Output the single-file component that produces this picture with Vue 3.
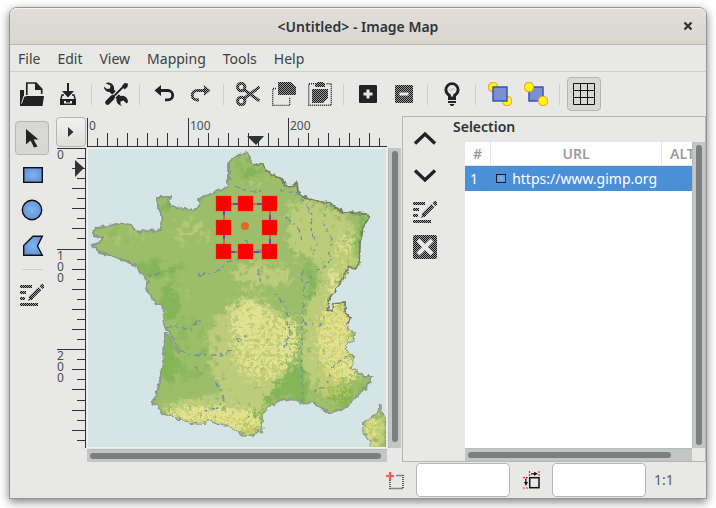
<script setup>
import { ref } from 'vue'

const ink = '#222'
const dither = 'url(#dither)'

const editLines = `<path fill="${dither}" d="M0 3h12v3H0zM0 9h6v3H0zM0 15h5v3H0zM0 21h18v3H0z"/><path d="M10 16.500L20 6.500" fill="none" stroke="${dither}" stroke-width="4"/><path d="M10 14l3 3-5 2z" fill="${dither}"/><path d="M21 5.500L23.500 3" fill="none" stroke="${dither}" stroke-width="4"/>`

const icons = {
  open: `<path fill="${ink}" d="M0 8h4v6l-3 6 3-6h20l-1.500 10H0z"/><path fill="none" stroke="${ink}" stroke-width="1.700" d="M6.800 13V1H16l5.700 6v5"/><path fill="${ink}" d="M15 .5l7.500 7.500H15z"/><path stroke="#e8e8e6" stroke-width="1" fill="none" d="M1.500 21.500L4 14h2"/>`,
  save: `<path fill="${ink}" d="M11 1h2v8h5l-6 6.500L6 9h5zM4 17h16v6H4z"/><path fill="none" stroke="${ink}" stroke-width="1.400" d="M8 13H6l-1.300 5M16 13h2l1.300 5"/><path fill="#e8e8e6" d="M8 19h8v2.500H8z"/><path fill="${ink}" d="M10 19h4v1.500h-4z"/>`,
  tools: `<path fill="${ink}" d="M1.500 1.200L4 .5a6 6 0 0 1 6 7L16.500 14a6 6 0 0 1 7.500 6l-1.500 1.500-3-3-3 1 0 3 2 1.300a6 6 0 0 1-6-7L5.500 10A5.500 5.500 0 0 1 0 4.500l3 2.500 3-.5.5-3z"/><path stroke="#e8e8e6" stroke-width="4.500" d="M6 18L19 5"/><path stroke="${ink}" stroke-width="4.600" stroke-linecap="round" d="M3.500 20.500l5-5"/><path stroke="${ink}" stroke-width="1.800" d="M8 16L20 4"/><path fill="${ink}" d="M18 4l2.500-3 3.500.5-.5 3.500-3 2.500z"/>`,
  undo: `<path fill="${ink}" d="M2.500 8.500L9 3v11z"/><path fill="none" stroke="${ink}" stroke-width="2.800" d="M8 8.500h8a4.700 4.700 0 0 1 0 9.400h-3"/>`,
  redo: `<path fill="${dither}" d="M22.500 8.500L16 3v11z"/><path fill="none" stroke="${dither}" stroke-width="3" d="M17 8.500H9a4.700 4.700 0 0 0 0 9.400h2"/>`,
  cut: `<g fill="none" stroke="${dither}" stroke-width="3"><circle cx="5.200" cy="5" r="3.700"/><circle cx="5.200" cy="19" r="3.700"/><path d="M8 7.500L23.500 19M8 16.500L23.500 5"/></g>`,
  copy: `<path fill="none" stroke="${ink}" stroke-width="1.400" stroke-dasharray="1 1" d="M4 6.500H.7v17h17V15"/><path fill="${dither}" d="M6 0h13l5 5v8H6z"/>`,
  paste: `<path fill="none" stroke="${ink}" stroke-width="1.400" stroke-dasharray="1 1" d="M6 1.700H.7v21.600h22.600V1.700H18"/><path fill="${dither}" d="M9 0h6v1h2v4H7V1h2zM4 7h16v9l-5 5H4z"/>`,
  plus: `<rect x="3" y="3" width="18" height="18" rx="1" fill="${ink}"/><path stroke="#e8e8e6" stroke-width="3" d="M7.500 12h9M12 7.500v9"/>`,
  minus: `<rect x="3" y="3" width="18" height="18" rx="1" fill="${dither}"/><path stroke="#e8e8e6" stroke-width="3" d="M7.500 12h9"/>`,
  bulb: `<path fill="none" stroke="${ink}" stroke-width="2.800" d="M9.500 16v-2.500C7 12 5.900 10 5.900 7.800a6.100 6.100 0 0 1 12.200 0c0 2.200-1.100 4.200-3.600 5.700V16"/><path fill="${ink}" d="M8 14.500h8V18H8zM8 19h8v2H8zM9.500 22h5l-1.500 2h-2z"/><path fill="none" stroke="#aaa" d="M9.500 7.500q1.200 2 2.500 0t2.500 0"/>`,
  front: `<g fill="#ff0" stroke="#ff9d3c" stroke-width="1.200"><circle cx="5" cy="5" r="4.600"/><circle cx="19" cy="19" r="4.600"/></g><rect x="5" y="5" width="14" height="14" fill="#7b8fd0" stroke="#2f4fb0" stroke-width="1.400"/>`,
  back: `<rect x="5" y="5" width="14" height="14" fill="#7b8fd0" stroke="#2f4fb0" stroke-width="1.400"/><g fill="#ff0" stroke="#ff9d3c" stroke-width="1.200"><circle cx="5" cy="5" r="4.600"/><circle cx="19" cy="19" r="4.600"/></g>`,
  grid: `<path fill="none" stroke="#111" stroke-width="1" d="M1.500 1.500h21v21h-21zM8.500 1v22M15.500 1v22M1 8.500h22M1 15.500h22"/>`,
  pointer: `<path fill="${ink}" d="M6 3l12.500 10.500h-5l4 7-3.500 1-3.500-7-4.500 4z"/>`,
  rect: `<rect x="3.700" y="5.700" width="18.600" height="14.600" fill="url(#shapeFill)" stroke="#111" stroke-width="1.400"/>`,
  circle: `<circle cx="12" cy="12" r="9.700" fill="url(#shapeFill)" stroke="#111" stroke-width="1.400"/>`,
  polygon: `<path d="M3.700 21.300V11.500l9.300-9.300h9.300L17.500 12l4.800 9.300z" fill="url(#shapeFill)" stroke="#111" stroke-width="1.400"/>`,
  edit: editLines,
  up: `<path fill="none" stroke="${ink}" stroke-width="3.400" d="M2 16.500l10-9.500 10 9.500"/>`,
  down: `<path fill="none" stroke="${ink}" stroke-width="3.400" d="M2 7.500L12 17l10-9.500"/>`,
  remove: `<rect width="24" height="24" rx="2" fill="${dither}"/><path stroke="#e8e8e6" stroke-width="4.200" d="M5 5l14 14M19 5L5 19"/>`,
  origin: `<path fill="none" stroke="#222" stroke-width="1.400" stroke-dasharray="1 1" d="M7 12v8.500h13v-13h-7"/><path stroke="#f55" stroke-width="2.200" d="M3 8h8M7 4v8"/>`,
  size: `<rect x="10.700" y="9.700" width="9.300" height="10" fill="none" stroke="#111" stroke-width="1.500"/><path fill="none" stroke="#f22" stroke-width="1.200" stroke-dasharray="2 1" d="M10.500 3v6M20 3v6M4 9.700h6M4 20h6"/><path fill="#111" d="M12 5.200h3V3.700l4 2-4 2V6.500h-3zM6.200 10.500h1.300V14H9l-2 4-2-4h1.200z"/>`
}

const menus = ['File', 'Edit', 'View', 'Mapping', 'Tools', 'Help']

const toolbar = [
  [['open', 'Open'], ['save', 'Save']],
  [['tools', 'Preferences']],
  [['undo', 'Undo'], ['redo', 'Redo']],
  [['cut', 'Cut'], ['copy', 'Copy'], ['paste', 'Paste']],
  [['plus', 'Zoom in'], ['minus', 'Zoom out']],
  [['bulb', 'Edit map info']],
  [['front', 'Move to front'], ['back', 'Send to back']],
  [['grid', 'Grid']]
]

const tools = [['pointer', 'Select'], ['rect', 'Rectangle'], ['circle', 'Circle'], ['polygon', 'Polygon']]
const panelTools = [['up', 'Move up'], ['down', 'Move down'], ['edit', 'Edit area'], ['remove', 'Delete area']]

const activeTool = ref('pointer')
const gridOn = ref(true)
const position = ref('')
const size = ref('')

const ticks = Array.from({ length: 30 }, (_, i) => ({
  at: Math.max(0, Math.round(i * 10.07 - 0.2)),
  length: i % 10 === 0 ? 29 : i % 2 === 0 ? 14 : 9,
  label: i % 10 === 0 ? String(i * 10) : ''
}))
const majors = ticks.filter(t => t.label)

const scroll = { canvasX: 99, canvasY: 99, listX: 92, listY: 100 }

const land = 'M247 153L242 154 232 158 229 165 229 180 225 188 213 193 205 196 199 199 200 205 193 211 183 208 175 207 170 207 168 202 170 197 157 197 158 207 161 213 162 230 155 231 147 230 141 232 135 231 132 225 123 223 113 225 97 228 92 232 95 236 103 238 101 242 93 245 100 253 108 255 123 260 137 266 140 273 147 280 148 283 146 288 155 302 164 308 163 317 165 328 173 337 175 344 180 352 173 346 171 338 165 333 165 343 163 363 160 380 157 395 151 403 157 405 162 413 177 418 190 423 205 424 208 419 223 425 233 428 240 434 252 436 258 430 263 432 262 425 262 413 268 407 283 399 298 400 302 404 312 402 327 411 330 413 347 407 352 400 367 387 372 376 363 376 352 368 353 357 345 348 345 344 353 341 355 333 348 330 347 323 351 318 345 312 345 302 333 303 332 311 327 310 330 297 338 287 347 273 348 266 356 269 359 263 360 243 363 227 369 217 367 214 347 213 337 209 330 203 320 202 305 198 298 192 297 183 290 188 285 186 282 178 273 175 267 171 262 164 253 165z'
const island = 'M380 404L382 413 387 422 387 448 371 448 370 441 366 437 363 430 363 423 373 417 378 413z'
const border = 'M253 165L262 164 267 171 273 175 282 178 285 186 290 188 297 183 298 192 305 198 320 202 330 203 337 209 347 213 367 214 369 217 363 227 360 243 359 263 356 269 348 266 338 287 330 297 327 310 332 311 333 303 345 302 345 312 351 318 347 323'

const reliefs = [
  { id: 'lush', color: '#84b558', seed: 4, freq: 0.1, noise: 1.8, soft: 5,
    areas: [[250, 168, 14, 14, 0.7], [165, 205, 10, 12, 0.6], [158, 268, 26, 10, 0.7], [170, 302, 12, 20, 0.8], [168, 360, 9, 32, 0.9], [190, 350, 24, 40, 0.35], [282, 385, 22, 14, 1], [300, 375, 8, 42, 0.8], [262, 410, 14, 18, 1], [312, 285, 8, 30, 0.7], [362, 235, 5, 24, 1], [350, 397, 24, 9, 1], [298, 240, 8, 20, 0.5], [383, 432, 5, 14, 1], [120, 235, 24, 12, 0.3]] },
  { id: 'plain', color: '#bdcc7a', seed: 9, freq: 0.14, noise: 2, soft: 6,
    areas: [[125, 236, 28, 9, 0.4], [192, 232, 24, 14, 0.5], [262, 275, 34, 14, 0.75], [320, 235, 34, 28, 0.9], [248, 350, 40, 54, 0.9], [215, 408, 54, 12, 0.8], [325, 340, 24, 56, 0.9], [255, 182, 14, 10, 0.4], [178, 290, 22, 12, 0.25], [305, 210, 24, 10, 0.7], [374, 430, 10, 24, 1], [340, 275, 20, 26, 0.9]] },
  { id: 'hill', color: '#e2e292', seed: 15, freq: 0.26, noise: 2, soft: 7,
    areas: [[262, 345, 34, 42, 0.55], [245, 315, 18, 22, 0.5], [335, 340, 18, 40, 0.85], [208, 415, 50, 8, 1], [244, 425, 20, 8, 1], [345, 245, 10, 16, 0.7], [335, 283, 8, 22, 0.8], [290, 340, 12, 26, 0.5], [372, 430, 7, 20, 0.9], [345, 372, 18, 10, 0.85], [290, 260, 14, 20, 0.15]] },
  { id: 'ridge', color: '#c8cb62', seed: 23, freq: 0.36, noise: 2, soft: 6,
    areas: [[264, 350, 28, 38, 0.25], [335, 345, 20, 46, 0.42], [212, 421, 48, 6, 0.6], [335, 395, 26, 12, 0.4], [344, 270, 8, 34, 0.35], [374, 430, 8, 18, 0.5], [248, 431, 14, 5, 0.8]] }
]

const rivers = 'M235 186l12 5 14 0M280 190l18 4 8 10 6 10-1 15 6 15-4 10M326 205l-2 20 8 14-3 18M199 275l18-3 10-10 16-4M245 240q5 12 16 10l10 8M160 273l-12 3M166 328l12-2 12 5 8-11 8 5M180 350l10 5 32 0 12-6 4-10 10-4M193 365l10 10M215 381l6 10 3 8-6 9-14 3M302 270l2 30-2 24 0 60 0 18M302 323l18 3 5-12M284 348l6-16-4-26-12-14M330 372l-3 14-16 6M331 368l16-12M258 270l3 14M305 285l10-12 18-14M286 218l12 8 4 14'

const handles = [[216, 196], [238, 196], [262, 196], [216, 220], [262, 220], [216, 244], [238, 244], [262, 244]]
</script>

<template>
  <div class="desktop">
    <div class="window">
      <header class="titlebar">
        <h1>&lt;Untitled&gt; - Image Map</h1>
        <button class="close" aria-label="Close">
          <svg width="10" height="10" viewBox="0 0 10 10"><path d="M1.500 1.500l7 7M8.500 1.500l-7 7" stroke="#2e3436" stroke-width="2.300" /></svg>
        </button>
      </header>

      <nav class="menubar">
        <button v-for="m in menus" :key="m">{{ m }}</button>
      </nav>

      <svg class="defs" width="0" height="0" aria-hidden="true">
        <defs>
          <pattern id="dither" width="2" height="2" patternUnits="userSpaceOnUse">
            <rect width="2" height="2" fill="#222" fill-opacity=".38" />
            <path d="M0 0h1v1H0zM1 1h1v1H1z" fill="#161616" />
          </pattern>
          <radialGradient id="shapeFill">
            <stop offset="0" stop-color="#7ab8f0" />
            <stop offset="1" stop-color="#6b92d8" />
          </radialGradient>
        </defs>
      </svg>

      <div class="toolbar" role="toolbar">
        <template v-for="(group, g) in toolbar" :key="g">
          <span v-if="g" class="divider"></span>
          <button
            v-for="[name, label] in group" :key="name" class="tool"
            :class="{ pressed: name === 'grid' && gridOn }" :aria-label="label"
            @click="name === 'grid' && (gridOn = !gridOn)"
          >
            <svg width="24" height="24" viewBox="0 0 24 24" v-html="icons[name]"></svg>
          </button>
        </template>
      </div>

      <main class="content">
        <section class="work">
          <div class="toolbox">
            <button
              v-for="[name, label] in tools" :key="name" class="tool"
              :class="{ pressed: activeTool === name }" :aria-label="label" @click="activeTool = name"
            >
              <svg width="24" height="24" viewBox="0 0 24 24" v-html="icons[name]"></svg>
            </button>
            <span class="divider flat"></span>
            <button class="tool" aria-label="Edit selected area">
              <svg width="24" height="24" viewBox="0 0 24 24" v-html="icons.edit"></svg>
            </button>
          </div>

          <div class="view">
            <button class="corner" aria-label="Canvas menu">
              <svg width="6" height="10" viewBox="0 0 6 10"><path d="M0 0l5.500 5L0 10z" fill="#2e3436" /></svg>
            </button>

            <div class="ruler">
              <svg class="scale" shape-rendering="crispEdges">
                <rect y="28" width="100%" height="1" />
                <rect v-for="t in ticks" :key="t.at" :x="t.at" :y="29 - t.length" width="1" :height="t.length" />
                <text v-for="t in majors" :key="'l' + t.at" :x="t.at + 2" y="12">{{ t.label }}</text>
                <path d="M160 18h17l-8 9z" shape-rendering="auto" />
              </svg>
            </div>
            <span></span>

            <div class="ruler">
              <svg class="scale" shape-rendering="crispEdges">
                <rect x="28" width="1" height="100%" />
                <rect v-for="t in ticks" :key="t.at" :x="29 - t.length" :y="t.at" :width="t.length" height="1" />
                <g v-for="t in majors" :key="'l' + t.at">
                  <text v-for="(c, i) in t.label" :key="i" x="0" :y="t.at + 11 + i * 11">{{ c }}</text>
                </g>
                <path d="M18 12v17l9-9z" shape-rendering="auto" />
              </svg>
            </div>

            <div class="canvas">
              <svg viewBox="88 149 298 298" preserveAspectRatio="xMinYMin slice">
                <defs>
                  <clipPath id="landClip"><path :d="land + island" /></clipPath>
                  <filter id="rough" x="-5%" y="-5%" width="110%" height="110%" color-interpolation-filters="sRGB">
                    <feTurbulence type="fractalNoise" baseFrequency="0.2" numOctaves="2" seed="3" />
                    <feDisplacementMap in="SourceGraphic" scale="5" xChannelSelector="R" yChannelSelector="G" />
                  </filter>
                  <filter
                    v-for="r in reliefs" :id="r.id" :key="r.id" filterUnits="userSpaceOnUse"
                    x="88" y="149" width="300" height="300" color-interpolation-filters="sRGB"
                  >
                    <feGaussianBlur in="SourceGraphic" :stdDeviation="r.soft" result="area" />
                    <feTurbulence type="fractalNoise" :baseFrequency="r.freq" numOctaves="3" :seed="r.seed" />
                    <feColorMatrix values="0 0 0 0 0  0 0 0 0 0  0 0 0 0 0  1 0 0 0 0" result="grain" />
                    <feComposite in="area" in2="grain" operator="arithmetic" k1="0" k2="1" :k3="r.noise" :k4="-r.noise / 2" />
                    <feComponentTransfer><feFuncA type="linear" slope="3" intercept="-1" /></feComponentTransfer>
                    <feComposite in2="area" operator="in" result="shape" />
                    <feComponentTransfer in="shape" result="solid"><feFuncA type="linear" slope="1.8" intercept="0" /></feComponentTransfer>
                    <feFlood :flood-color="r.color" />
                    <feComposite in2="solid" operator="in" />
                  </filter>
                </defs>
                <g filter="url(#rough)">
                  <path :d="land + island" fill="#9cbe6b" stroke="#8c9a88" stroke-width="2" />
                  <g clip-path="url(#landClip)">
                    <g v-for="r in reliefs" :key="r.id" :filter="`url(#${r.id})`">
                      <ellipse v-for="(a, i) in r.areas" :key="i" :cx="a[0]" :cy="a[1]" :rx="a[2]" :ry="a[3]" :fill-opacity="a[4]" />
                    </g>
                  </g>
                  <path :d="border" fill="none" stroke="#747f5c" stroke-width="1.500" />
                  <path :d="rivers" fill="none" stroke="#7290a0" stroke-width="1.300" stroke-dasharray="6 3 3 4" />
                </g>
                <path d="M224 204h46v48h-46z" fill="none" stroke="#ff3b30" stroke-width="1.500" />
                <path d="M224 204h46v48h-46z" fill="none" stroke="#4038ff" stroke-width="1.500" stroke-dasharray="6 6" stroke-dashoffset="3" />
                <circle cx="245" cy="226" r="4" fill="#e06a25" />
                <rect v-for="(h, i) in handles" :key="i" :x="h[0]" :y="h[1]" width="15" height="15" fill="#f00" stroke="#ff2a10" stroke-opacity=".6" stroke-width=".6" />
              </svg>
            </div>
            <div class="scrollbar vertical"><span :style="{ height: scroll.canvasY + '%' }"></span></div>
            <span></span>
            <div class="scrollbar horizontal"><span :style="{ width: scroll.canvasX + '%' }"></span></div>
          </div>
        </section>

        <aside class="panel">
          <div class="panel-tools">
            <button v-for="[name, label] in panelTools" :key="name" class="tool" :aria-label="label">
              <svg width="24" height="24" viewBox="0 0 24 24" v-html="icons[name]"></svg>
            </button>
          </div>
          <div class="selection">
            <h2>Selection</h2>
            <div class="list">
              <div class="rows">
                <table>
                  <colgroup><col class="num"><col class="url"><col></colgroup>
                  <thead><tr><th>#</th><th>URL</th><th class="alt">ALT</th></tr></thead>
                  <tbody>
                    <tr>
                      <td>1</td>
                      <td>
                        <span class="link">
                          <svg width="13" height="11" viewBox="0 0 13 11"><rect x=".5" y=".5" width="12" height="10" fill="url(#shapeFill)" stroke="#000" /></svg>
                          https://www.gimp.org
                        </span>
                      </td>
                      <td></td>
                    </tr>
                  </tbody>
                </table>
              </div>
              <div class="scrollbar vertical"><span :style="{ height: scroll.listY + '%' }"></span></div>
              <div class="scrollbar horizontal"><span :style="{ width: scroll.listX + '%' }"></span></div>
            </div>
          </div>
        </aside>
      </main>

      <footer class="status">
        <label for="position"><svg width="24" height="24" viewBox="0 0 24 24" v-html="icons.origin"></svg></label>
        <input id="position" v-model="position" type="text" aria-label="Position">
        <label for="size"><svg width="24" height="24" viewBox="0 0 24 24" v-html="icons.size"></svg></label>
        <input id="size" v-model="size" type="text" aria-label="Size">
        <output>1:1</output>
      </footer>
    </div>
  </div>
</template>

<style>
body {
  margin: 0;
  background: #fff;
}
</style>

<style scoped>
* {
  box-sizing: border-box;
}

.desktop {
  display: flex;
  min-height: 100vh;
  padding: 7px 9px 9px;
  overflow: hidden;
  font: 14px/20px "Noto Sans", "Open Sans", sans-serif;
  color: #3c4244;
}

.window {
  display: flex;
  flex: 1;
  flex-direction: column;
  min-width: 0;
  border: 1px solid #929595;
  border-radius: 8px 8px 0 0;
  background: #e8e8e6;
  box-shadow: 0 3px 10px rgba(0, 0, 0, 0.5);
}

svg {
  display: block;
}

button {
  margin: 0;
  padding: 0;
  border: 0;
  background: none;
  color: inherit;
  font: inherit;
}

.defs {
  position: absolute;
}

.titlebar {
  display: grid;
  grid-template-columns: 36px 1fr 36px;
  align-items: center;
  height: 37px;
  border-bottom: 1px solid #bfb8b1;
  border-radius: 7px 7px 0 0;
  background: linear-gradient(#e1dedb, #dad6d0);
  box-shadow: inset 0 1px #f5f4f3;
}

h1 {
  grid-column: 2;
  margin: 0;
  padding-top: 2px;
  text-align: center;
  font-size: 14px;
  line-height: 20px;
  font-weight: 600;
  color: #2e3436;
}

.close {
  display: grid;
  place-items: center;
  height: 36px;
}

.menubar {
  display: flex;
  gap: 17px;
  align-items: center;
  height: 27px;
  padding: 2px 8px 0;
  border-bottom: 1px solid #cececb;
}

.toolbar {
  display: flex;
  align-items: center;
  height: 44px;
  padding: 0 4px;
}

.tool {
  display: grid;
  flex: none;
  place-items: center;
  width: 34px;
  height: 34px;
  margin: 1px;
  border: 1px solid transparent;
  border-radius: 4px;
}

.tool.pressed {
  border-color: #b6b6b3;
  background: #d7d7d4;
}

.divider {
  width: 1px;
  height: 21px;
  margin: 0 6px 0 5px;
  background: #cfcfcc;
}

.divider.flat {
  width: 21px;
  height: 1px;
  margin: 5px 0 6px;
}

.content {
  display: grid;
  flex: 1;
  grid-template-columns: minmax(0, 49fr) minmax(0, 38fr);
}

.work {
  display: flex;
  min-width: 0;
}

.toolbox {
  display: flex;
  flex: none;
  flex-direction: column;
  align-items: center;
  padding: 4px 6px 0 4px;
}

.view {
  display: grid;
  flex: 1;
  grid-template-columns: 30px minmax(0, 1fr) 13px;
  grid-template-rows: 30px minmax(0, 1fr) 13px;
  gap: 1px;
  min-width: 0;
  padding: 1px 1px 0 0;
}

.corner {
  display: grid;
  place-items: center;
  border: 1px solid #b6b6b3;
  border-radius: 4px;
  background: linear-gradient(#f1f1f0, #dededb);
}

.ruler {
  display: flex;
  min-width: 0;
  min-height: 0;
  padding: 1px 0 0 0;
  overflow: hidden;
}

.ruler + .canvas {
  background: #d5e4e4;
}

.corner ~ .ruler ~ .ruler {
  padding: 0 0 0 1px;
}

.scale {
  flex: 1;
  width: 100%;
  height: 100%;
  min-width: 0;
  fill: #2e3436;
}

.scale text {
  font-size: 12px;
  fill: #4a5052;
}

.canvas {
  display: flex;
  min-width: 0;
  min-height: 0;
  border: 1px solid #efefee;
  overflow: hidden;
}

.canvas svg {
  flex: 1;
  width: 100%;
  height: 100%;
  min-width: 0;
}

.scrollbar {
  padding: 3px;
  background: #c4c6c5;
}

.scrollbar span {
  display: block;
  border-radius: 3px;
  background: #7b7f7f;
}

.scrollbar.vertical {
  border-left: 1px solid #b9bbb9;
}

.scrollbar.vertical span {
  width: 6px;
}

.scrollbar.horizontal {
  border-top: 1px solid #b9bbb9;
}

.scrollbar.horizontal span {
  height: 6px;
}

.panel {
  display: flex;
  min-width: 0;
  border: 1px solid #b6b6b3;
}

.panel-tools {
  display: flex;
  flex: none;
  flex-direction: column;
  padding: 4px;
}

.selection {
  display: flex;
  flex: 1;
  flex-direction: column;
  min-width: 0;
  padding-left: 6px;
}

h2 {
  margin: 0;
  padding-bottom: 5px;
  font-size: 14px;
  line-height: 20px;
  font-weight: 600;
  color: #2e3436;
}

.list {
  display: grid;
  flex: 1;
  grid-template-columns: minmax(0, 1fr) 13px;
  grid-template-rows: minmax(0, 1fr) 13px;
  margin-left: 12px;
}

.rows {
  overflow: hidden;
  background: #fff;
}

table {
  width: 280px;
  border-collapse: separate;
  border-spacing: 0;
  table-layout: fixed;
}

.num {
  width: 26px;
}

.url {
  width: 171px;
}

th {
  height: 24px;
  padding: 0;
  border-right: 1px solid #e6e6e5;
  border-bottom: 1px solid #e6e6e5;
  font-weight: 600;
  color: #999c9c;
}

th.alt {
  padding-left: 8px;
  text-align: left;
}

td {
  height: 25px;
  padding: 0 5px;
  background: #4a90d9;
  color: #fff;
}

.link {
  display: flex;
  gap: 6px;
  align-items: center;
  white-space: nowrap;
}

.status {
  display: flex;
  gap: 8px;
  align-items: center;
  justify-content: flex-end;
  height: 36px;
  padding-right: 8px;
}

.status label {
  padding: 0 1px;
}

.status input {
  width: 94px;
  height: 34px;
  padding: 0 8px;
  border: 1px solid #b6b6b3;
  border-radius: 4px;
  background: #fff;
  color: inherit;
  font: inherit;
}

.status output {
  width: 44px;
  color: #5c6163;
}
</style>
